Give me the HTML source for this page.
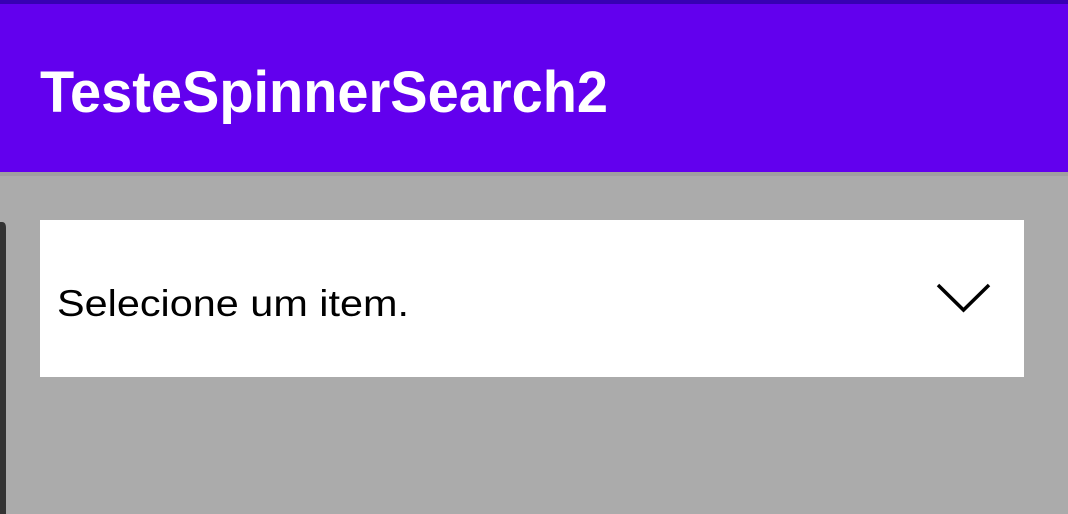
<!DOCTYPE html>
<html><head><meta charset="utf-8"><style>
html,body{margin:0;padding:0;width:1068px;height:514px;overflow:hidden;background:#ababab}
</style></head><body>
<svg width="1068" height="514" xmlns="http://www.w3.org/2000/svg" style="position:absolute;left:0;top:0">
<rect x="0" y="0" width="1068" height="514" fill="#ababab"/>
<rect x="0" y="0" width="1068" height="172" fill="#6200ee"/>
<rect x="0" y="0" width="1068" height="4" fill="#3700b3"/>
<rect x="0" y="172" width="1068" height="4" fill="#a0a0a0"/>
<path d="M0 222 H2 Q6 222 6 228 V514 H0 Z" fill="#333"/>
<text x="40" y="112" font-family="Liberation Sans, sans-serif" font-weight="bold" font-size="58" fill="#fff" textLength="568" lengthAdjust="spacingAndGlyphs">TesteSpinnerSearch2</text>
<rect x="40" y="220" width="984" height="157" fill="#fff"/>
<text x="57" y="316" font-family="Liberation Sans, sans-serif" font-size="37" fill="#000" textLength="352" lengthAdjust="spacingAndGlyphs">Selecione um item.</text>
<path d="M938 285 L963.5 310 L989 285" fill="none" stroke="#000" stroke-width="3.5"/>
</svg>
</body></html>
